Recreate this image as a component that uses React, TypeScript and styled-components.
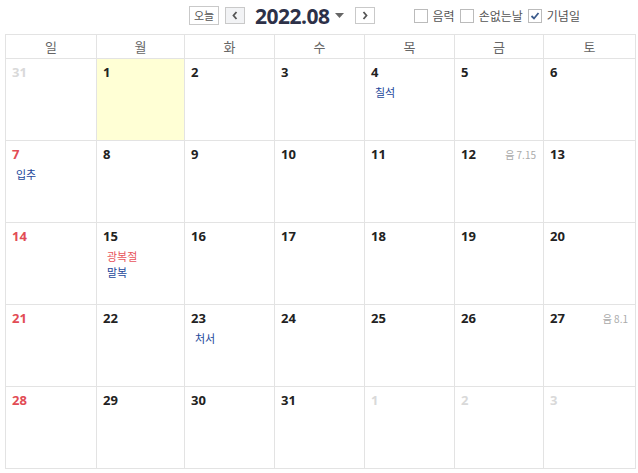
import React from "react";
import styled, { createGlobalStyle } from "styled-components";

const Global = createGlobalStyle`
  html, body { margin: 0; padding: 0; background: #fff; }
  body { font-family: "Open Sans", "Noto Sans CJK KR", sans-serif; }
`;

const Page = styled.div`
  width: 638px;
  height: 473px;
  padding: 0 2px 0 5px;
  box-sizing: border-box;
  display: flex;
  flex-direction: column;
`;

const TopBar = styled.div`
  height: 34px;
  display: flex;
  align-items: center;
  padding-left: 184px;
  box-sizing: border-box;
`;

const Nav = styled.div`
  display: flex;
  align-items: center;
`;

const TodayBtn = styled.button`
  height: 19px;
  width: 30px;
  padding: 0;
  border: 1px solid #c9c9c9;
  background: #fff;
  font-family: "Noto Sans CJK KR", sans-serif;
  font-size: 11px;
  color: #555;
  line-height: 17px;
  margin-top: -4px;
`;

const ArrowBtn = styled.button<{ $bg?: boolean }>`
  width: 20px;
  height: 17px;
  padding: 0;
  border: 1px solid #c9c9c9;
  background: ${(p) => (p.$bg ? "#f2f3f5" : "#fff")};
  display: flex;
  align-items: center;
  justify-content: center;
  margin-left: ${(p) => (p.$bg ? "6px" : "0")};
  margin-top: -4px;
`;

const Title = styled.div`
  display: flex;
  align-items: center;
  margin: -3px 0 0 10px;
  font-family: "Open Sans", sans-serif;
  font-weight: 700;
  font-size: 21px;
  color: #2d3148;
  letter-spacing: -0.5px;
`;

const Caret = styled.span`
  margin: 0 11px 0 5px;
  display: inline-flex;
`;

const Options = styled.div`
  display: flex;
  align-items: center;
  margin-left: 39px;
  margin-top: -3px;
  gap: 5px;
`;

const Opt = styled.label`
  display: flex;
  align-items: center;
  font-family: "Noto Sans CJK KR", sans-serif;
  font-size: 12px;
  color: #555;
`;

const Box = styled.span`
  width: 12px;
  height: 12px;
  border: 1px solid #bbb;
  background: #fff;
  margin-right: 5px;
  display: inline-flex;
  align-items: center;
  justify-content: center;
`;

const Grid = styled.div`
  display: grid;
  grid-template-columns: 91px 88px 90px 90px 90px 89px 92px;
  grid-template-rows: 24px repeat(5, 82px);
  border-top: 1px solid #e3e3e3;
  border-left: 1px solid #e3e3e3;
  width: 631px;
  box-sizing: border-box;
`;

const HeadCell = styled.div`
  border-right: 1px solid #e3e3e3;
  border-bottom: 1px solid #e3e3e3;
  display: flex;
  align-items: center;
  justify-content: center;
  font-family: "Noto Sans CJK KR", sans-serif;
  font-size: 13px;
  color: #666;
`;

const Cell = styled.div<{ $today?: boolean }>`
  border-right: 1px solid #e3e3e3;
  border-bottom: 1px solid #e3e3e3;
  background: ${(p) => (p.$today ? "#ffffd5" : "#fff")};
  padding: 3px 6px 0 6px;
  box-sizing: border-box;
  display: flex;
  flex-direction: column;
`;

const CellTop = styled.div`
  display: flex;
  justify-content: space-between;
  align-items: center;
  height: 20px;
`;

const DayNum = styled.span<{ $tone: "normal" | "sun" | "other" }>`
  font-family: "Open Sans", sans-serif;
  font-weight: 700;
  font-size: 13px;
  color: ${(p) =>
    p.$tone === "sun" ? "#e24c55" : p.$tone === "other" ? "#d9d9d9" : "#222"};
`;

const Lunar = styled.span`
  font-family: "Noto Sans CJK KR", "Open Sans", sans-serif;
  font-size: 10px;
  color: #aaa;
  margin-right: 1px;
`;

const Events = styled.div`
  display: flex;
  flex-direction: column;
  padding: 2px 0 0 4px;
`;

const Event = styled.span<{ $holiday?: boolean }>`
  font-family: "Noto Sans CJK KR", sans-serif;
  font-size: 11px;
  line-height: 16px;
  color: ${(p) => (p.$holiday ? "#e8555c" : "#24479a")};
`;

type Day = {
  n: number;
  other?: boolean;
  today?: boolean;
  lunar?: string;
  events?: { t: string; h?: boolean }[];
};

const days: Day[] = [
  { n: 31, other: true },
  { n: 1, today: true },
  { n: 2 },
  { n: 3 },
  { n: 4, events: [{ t: "칠석" }] },
  { n: 5 },
  { n: 6 },
  { n: 7, events: [{ t: "입추" }] },
  { n: 8 },
  { n: 9 },
  { n: 10 },
  { n: 11 },
  { n: 12, lunar: "음 7.15" },
  { n: 13 },
  { n: 14 },
  { n: 15, events: [{ t: "광복절", h: true }, { t: "말복" }] },
  { n: 16 },
  { n: 17 },
  { n: 18 },
  { n: 19 },
  { n: 20 },
  { n: 21 },
  { n: 22 },
  { n: 23, events: [{ t: "처서" }] },
  { n: 24 },
  { n: 25 },
  { n: 26 },
  { n: 27, lunar: "음 8.1" },
  { n: 28 },
  { n: 29 },
  { n: 30 },
  { n: 31 },
  { n: 1, other: true },
  { n: 2, other: true },
  { n: 3, other: true },
];

const heads = ["일", "월", "화", "수", "목", "금", "토"];

const Check = () => (
  <svg width="10" height="10" viewBox="0 0 10 10">
    <path d="M1.5 5 L4 7.5 L8.5 2" fill="none" stroke="#3b5b8c" strokeWidth="1.8" />
  </svg>
);

export default function App() {
  return (
    <>
      <Global />
      <Page>
        <TopBar>
          <Nav>
            <TodayBtn>오늘</TodayBtn>
            <ArrowBtn $bg>
              <svg width="8" height="9" viewBox="0 0 8 9">
                <path d="M5.5 1 L2.5 4.5 L5.5 8" fill="none" stroke="#555" strokeWidth="1.8" />
              </svg>
            </ArrowBtn>
            <Title>
              2022.08
              <Caret>
                <svg width="9" height="5" viewBox="0 0 9 5">
                  <path d="M0 0 H9 L4.5 5 Z" fill="#666" />
                </svg>
              </Caret>
            </Title>
            <ArrowBtn>
              <svg width="8" height="9" viewBox="0 0 8 9">
                <path d="M2.5 1 L5.5 4.5 L2.5 8" fill="none" stroke="#555" strokeWidth="1.8" />
              </svg>
            </ArrowBtn>
          </Nav>
          <Options>
            <Opt>
              <Box />
              음력
            </Opt>
            <Opt>
              <Box />
              손없는날
            </Opt>
            <Opt>
              <Box>
                <Check />
              </Box>
              기념일
            </Opt>
          </Options>
        </TopBar>
        <Grid>
          {heads.map((h) => (
            <HeadCell key={h}>{h}</HeadCell>
          ))}
          {days.map((d, i) => {
            const tone = d.other ? "other" : i % 7 === 0 ? "sun" : "normal";
            return (
              <Cell key={i} $today={d.today}>
                <CellTop>
                  <DayNum $tone={tone}>{d.n}</DayNum>
                  {d.lunar && <Lunar>{d.lunar}</Lunar>}
                </CellTop>
                {d.events && (
                  <Events>
                    {d.events.map((e) => (
                      <Event key={e.t} $holiday={e.h}>
                        {e.t}
                      </Event>
                    ))}
                  </Events>
                )}
              </Cell>
            );
          })}
        </Grid>
      </Page>
    </>
  );
}
